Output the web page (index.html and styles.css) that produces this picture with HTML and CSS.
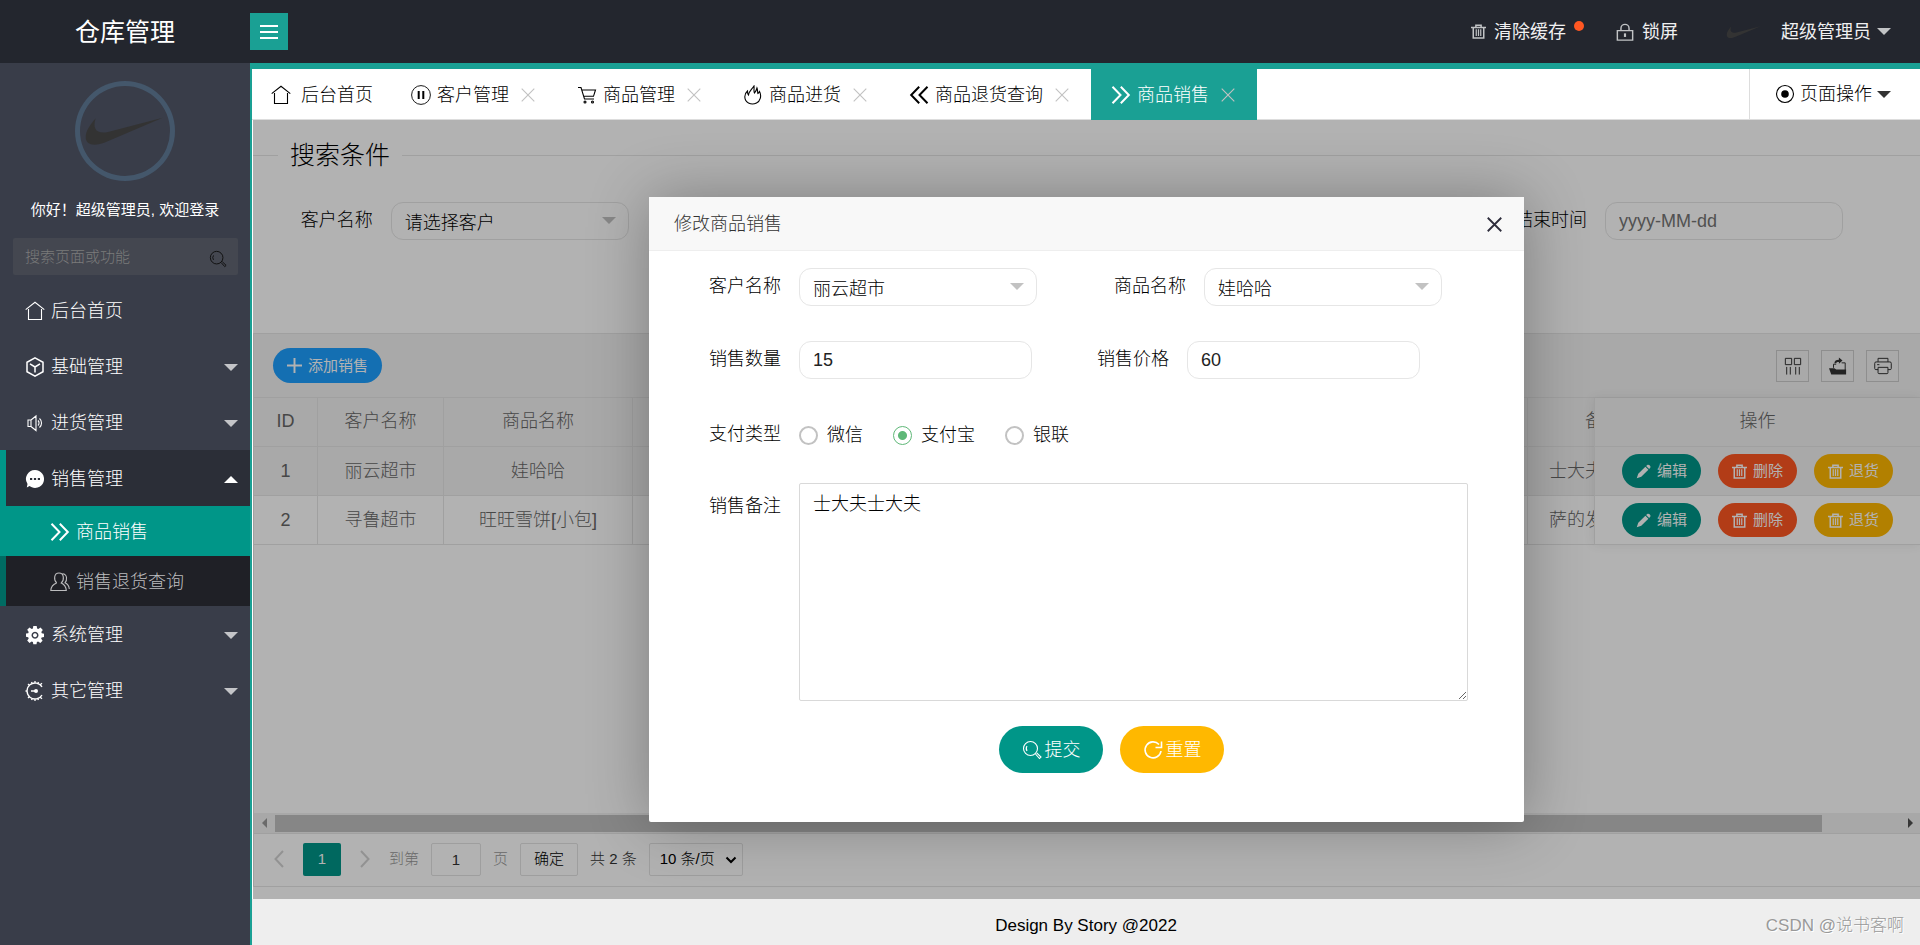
FILE: index.html
```html
<!DOCTYPE html>
<html lang="zh-CN">
<head>
<meta charset="utf-8">
<title>仓库管理</title>
<link rel="stylesheet" href="styles.css">
</head>
<body>
<svg class="defs" aria-hidden="true">
  <symbol id="home" viewBox="0 0 20 20"><path d="M.7 8.600 10 1.200l9.300 7.400M3.500 8v10.500h13V8"/></symbol>
  <symbol id="cube" viewBox="0 0 20 20"><path d="M10 .9 18 5.300v9.400l-8 4.400-8-4.400V5.300zM5 6.800l5 3.200 5-3.200M10 10v5.600" stroke-width="1.500"/></symbol>
  <symbol id="sound" viewBox="0 0 20 20"><path d="M3 7h3v6.500H3zM6 7l5-4v14.500l-5-4M13 7.500a3.500 3.500 0 0 1 0 5M14.500 5.500a6 6 0 0 1 0 9"/></symbol>
  <symbol id="chat" viewBox="0 0 20 20"><path fill="currentColor" stroke="none" fill-rule="evenodd" d="M10 1a9 9 0 1 1-5.500 16.100L1.800 18.500l.7-3.500A9 9 0 0 1 10 1zM5 8.900v2.200h2.200V8.900zm3.900 0v2.200h2.200V8.900zm3.900 0v2.200H15V8.900z"/></symbol>
  <symbol id="next" viewBox="0 0 20 20"><path stroke-width="2" d="m1.500 1.800 8 8.200-8 8.200M9.800 1.800l8 8.200-8 8.200"/></symbol>
  <symbol id="prev" viewBox="0 0 20 20"><path stroke-width="2" d="m10.200 1.800-8 8.200 8 8.200M18.500 1.800l-8 8.200 8 8.200"/></symbol>
  <symbol id="users" viewBox="0 0 20 20"><path d="M6.700 11C3.500 8 3.800 1 9 1s5.500 7 2.300 10c3 1.300 4.700 3.800 5 7.500H.8c.2-4 2.300-6.200 5.900-7.500M12.500 1.800c5 .3 4.800 6.500 2.500 9 2.500 1 4 3.400 4.300 6.200"/></symbol>
  <symbol id="gear" viewBox="0 0 20 20"><path fill="currentColor" stroke="none" fill-rule="evenodd" d="M8.300 1h3.400l.4 2.600 1.200.5 2.200-1.500 2.300 2.300-1.500 2.200.5 1.200 2.200.4v3.200l-2.400.5-.5 1.200 1.500 2.100-2.300 2.400-2.200-1.500-1.200.5-.4 2.100H8.300L7.900 17l-1.200-.5-2.200 1.500-2.300-2.400 1.500-2.100-.5-1.200L1 11.800V8.600l2.200-.4.500-1.200-1.500-2.200 2.300-2.300 2.200 1.500 1.200-.5zM10 6.700a3.500 3.500 0 1 0 .01 0zm0 1.500a2 2 0 1 1-.01 0z"/></symbol>
  <symbol id="cog" viewBox="0 0 20 20"><path stroke-width="1.300" d="M17 6A8 8 0 1 0 17 14M.5 10h2M10 2V0M10 20v-2M4.500 4.500 3 3M4.500 15.500 3 17M15.500 3.500l1.500-1.300M15.500 16.500l1.500 1.300M6.500 1l.7 1.600M6.500 19l.7-1.600M13.500 1l-.7 1.600M13.500 19l-.7-1.600M6 10h5"/><circle cx="11" cy="10" r="2" fill="currentColor" stroke="none"/></symbol>
  <symbol id="search" viewBox="0 0 20 20"><circle cx="8.500" cy="8.500" r="7"/><path d="M5 11a4.500 4.500 0 0 1 0-5M13.500 14l4 4.500 1.500-1.400-4.300-4.200"/></symbol>
  <symbol id="pause" viewBox="0 0 20 20"><circle cx="10" cy="10" r="9.400" stroke-width=".9"/><path stroke-width="2" d="M7.700 6v8M12.300 6v8"/></symbol>
  <symbol id="cart" viewBox="0 0 20 20"><path d="M1 2.500h3L7.500 14H17M5 5h13.500l-2 6.300H6.800"/><circle cx="8" cy="17" r="1"/><circle cx="15.500" cy="17" r="1"/></symbol>
  <symbol id="fire" viewBox="0 0 20 20"><path d="M5.500 18C.5 15 1 9 4.500 6c0 2 .2 3 1 4 .5-3.800 3-5 5.500-9 .3 3-.5 5.500.5 7 1-1.200 2-3 2.500-5 .8 1.800.4 4 .9 5.500.9-.6 1.300-1.300 1.600-2C19 11 17 16.500 13.500 18c-2.500 1.300-5.500 1.300-8 0"/></symbol>
  <symbol id="target" viewBox="0 0 20 20"><circle cx="10" cy="10" r="8.500"/><circle cx="10" cy="10" r="3.800" fill="currentColor" stroke="none"/></symbol>
  <symbol id="trash" viewBox="0 0 20 20"><path stroke-width="2" d="M0 4.500h20M6.500 4V1.800h7V4M3 5v13.500h14V5"/><path stroke-width="1.600" d="M7 7v9M10 7v9M13 7v9"/></symbol>
  <symbol id="lock" viewBox="0 0 20 20"><path stroke-width="1.600" d="M1.500 8.500h17V19h-17zM5.500 8.500V6a4.500 4.500 0 0 1 9 0v2.500"/><path stroke-width="2.400" d="M10 11.500v4"/></symbol>
  <symbol id="pencil" viewBox="0 0 20 20"><path fill="currentColor" stroke="none" d="M1 19 3 13 12.500 3.500l4 4L7 17zM13.500 2.500 15.500 1q1.500-.5 3 1t.5 3l-1.500 1.500z"/></symbol>
  <symbol id="plus" viewBox="0 0 20 20"><path stroke-width="2.600" d="M10 0v20M0 10h20"/></symbol>
  <symbol id="close" viewBox="0 0 20 20"><path d="m1 1 18 18M19 1 1 19"/></symbol>
  <symbol id="columns" viewBox="0 0 20 20"><path d="M1.500 1.500h7v7h-7zM11.500 1.500h7v7h-7zM3 11v8.500M7 11v8.500M13 11v8.500M17 11v8.500"/></symbol>
  <symbol id="export" viewBox="0 0 20 20"><path d="M5 12V8h3M14 6.500h4V18"/><path fill="currentColor" stroke="none" d="M0 12.500h6l2 1.500h11v5.500H2.500zM6 7c0-3 2-4 5-4V.5L15 4l-4 3.500V5.500C9 5.500 8 6 8 7z"/></symbol>
  <symbol id="print" viewBox="0 0 20 20"><path d="M4.500 5.500v-4h11v4M4.500 14H2q-1.200 0-1.200-1.200V7q0-1.500 1.500-1.500h15.400q1.500 0 1.500 1.500v5.800Q19.200 14 18 14h-2.500M4.500 11.500h11v6q0 1-1 1h-9q-1 0-1-1zM3.500 8.500H6"/></symbol>
  <symbol id="refresh" viewBox="0 0 20 20"><path stroke-width="1.600" d="M18 11a8 8 0 1 1-2-6.500M18.500 1.500v6h-6"/></symbol>
  <symbol id="swoosh" viewBox="0 0 100 100"><path fill="#333" stroke="none" d="M20.700 37.300C14 45 10.700 51 10.700 56 10.700 64 19 66 31 61L87.700 36.700 33 51C22 53.500 17 48 20.700 37.300z"/></symbol>
</svg>

<div class="app">
  <header class="header">
    <h1 class="logo">仓库管理</h1>
    <button class="menu-toggle" type="button" aria-label="菜单"><span></span><span></span><span></span></button>
    <nav class="top-nav">
      <a class="top-link" href="#"><svg class="icon icon-s"><use href="#trash"/></svg>清除缓存<i class="dot"></i></a>
      <a class="top-link lock" href="#"><svg class="icon icon-m"><use href="#lock"/></svg>锁屏</a>
      <a class="top-link user" href="#"><svg class="user-pic"><use href="#swoosh"/></svg>超级管理员<i class="caret"></i></a>
    </nav>
  </header>

  <aside class="sidebar">
    <div class="avatar"><svg><use href="#swoosh"/></svg></div>
    <p class="greeting">你好！超级管理员, 欢迎登录</p>
    <div class="side-search">
      <input type="text" placeholder="搜索页面或功能" aria-label="搜索页面或功能">
      <svg class="icon icon-m"><use href="#search"/></svg>
    </div>
    <nav class="side-nav">
      <a class="nav-item" href="#"><svg class="icon"><use href="#home"/></svg>后台首页</a>
      <a class="nav-item" href="#"><svg class="icon"><use href="#cube"/></svg>基础管理<i class="caret"></i></a>
      <a class="nav-item" href="#"><svg class="icon"><use href="#sound"/></svg>进货管理<i class="caret"></i></a>
      <div class="nav-group">
        <a class="nav-item open" href="#"><svg class="icon"><use href="#chat"/></svg>销售管理<i class="caret up"></i></a>
        <a class="sub-item current" href="#"><svg class="icon"><use href="#next"/></svg>商品销售</a>
        <a class="sub-item" href="#"><svg class="icon"><use href="#users"/></svg>销售退货查询</a>
      </div>
      <a class="nav-item" href="#"><svg class="icon"><use href="#gear"/></svg>系统管理<i class="caret"></i></a>
      <a class="nav-item" href="#"><svg class="icon"><use href="#cog"/></svg>其它管理<i class="caret"></i></a>
    </nav>
  </aside>

  <main class="main">
    <div class="tabs">
      <a class="tab home" href="#"><svg class="icon"><use href="#home"/></svg>后台首页</a>
      <a class="tab" href="#"><svg class="icon"><use href="#pause"/></svg>客户管理<svg class="tab-close"><use href="#close"/></svg></a>
      <a class="tab" href="#"><svg class="icon"><use href="#cart"/></svg>商品管理<svg class="tab-close"><use href="#close"/></svg></a>
      <a class="tab" href="#"><svg class="icon"><use href="#fire"/></svg>商品进货<svg class="tab-close"><use href="#close"/></svg></a>
      <a class="tab" href="#"><svg class="icon"><use href="#prev"/></svg>商品退货查询<svg class="tab-close"><use href="#close"/></svg></a>
      <a class="tab active" href="#"><svg class="icon"><use href="#next"/></svg>商品销售<svg class="tab-close"><use href="#close"/></svg></a>
      <a class="page-ops" href="#"><svg class="icon"><use href="#target"/></svg>页面操作<i class="caret"></i></a>
    </div>

    <section class="frame">
      <h2 class="search-title"><span>搜索条件</span></h2>
      <form class="search-form">
        <div class="search-field">
          <label for="s-customer">客户名称</label>
          <div class="select"><select id="s-customer"><option>请选择客户</option></select></div>
        </div>
        <div class="search-field last">
          <label for="s-end">结束时间</label>
          <input class="input" id="s-end" type="text" placeholder="yyyy-MM-dd">
        </div>
      </form>

      <div class="grid">
        <div class="toolbar">
          <button class="btn btn-blue" type="button"><svg class="icon icon-s"><use href="#plus"/></svg>添加销售</button>
          <div class="tools">
            <button type="button" aria-label="筛选列"><svg class="icon icon-m"><use href="#columns"/></svg></button>
            <button type="button" aria-label="导出"><svg class="icon icon-m"><use href="#export"/></svg></button>
            <button type="button" aria-label="打印"><svg class="icon icon-m"><use href="#print"/></svg></button>
          </div>
        </div>
        <div class="tables">
          <div class="scroll-area">
            <table class="table">
              <colgroup><col class="c-id"><col class="c-customer"><col class="c-goods"><col class="c-rest"><col class="c-remark"></colgroup>
              <thead><tr><th>ID</th><th>客户名称</th><th>商品名称</th><th></th><th>备注</th></tr></thead>
              <tbody>
                <tr class="hover"><td>1</td><td>丽云超市</td><td>娃哈哈</td><td></td><td>士大夫士大夫</td></tr>
                <tr><td>2</td><td>寻鲁超市</td><td>旺旺雪饼[小包]</td><td></td><td>萨的发萨的发</td></tr>
              </tbody>
            </table>
          </div>
          <div class="fixed-area">
            <table class="table">
              <thead><tr><th>操作</th></tr></thead>
              <tbody>
                <tr class="hover"><td><div class="actions">
                  <button class="btn btn-green" type="button"><svg class="icon icon-s"><use href="#pencil"/></svg>编辑</button>
                  <button class="btn btn-red" type="button"><svg class="icon icon-s"><use href="#trash"/></svg>删除</button>
                  <button class="btn btn-yellow" type="button"><svg class="icon icon-s"><use href="#trash"/></svg>退货</button>
                </div></td></tr>
                <tr><td><div class="actions">
                  <button class="btn btn-green" type="button"><svg class="icon icon-s"><use href="#pencil"/></svg>编辑</button>
                  <button class="btn btn-red" type="button"><svg class="icon icon-s"><use href="#trash"/></svg>删除</button>
                  <button class="btn btn-yellow" type="button"><svg class="icon icon-s"><use href="#trash"/></svg>退货</button>
                </div></td></tr>
              </tbody>
            </table>
          </div>
        </div>
        <div class="scrollbar"><i class="arrow left"></i><div class="track"><div class="thumb"></div></div><i class="arrow right"></i></div>
        <div class="pager">
          <svg class="chevron" viewBox="0 0 10 18"><path d="M9 1 1.500 9 9 17"/></svg>
          <button class="page current" type="button">1</button>
          <svg class="chevron" viewBox="0 0 10 18"><path d="M1 1 8.500 9 1 17"/></svg>
          <label class="muted" for="page-no">到第</label>
          <input class="page-no" id="page-no" type="text" value="1">
          <span class="muted">页</span>
          <button class="page go" type="button">确定</button>
          <span class="total">共 2 条</span>
          <div class="page-size"><select aria-label="每页条数"><option>10 条/页</option></select><svg viewBox="0 0 12 8"><path d="m1.500 1.500 4.500 4.500 4.500-4.500"/></svg></div>
        </div>
      </div>

      <div class="shade">
        <div class="dialog" role="dialog" aria-labelledby="dialog-title">
          <div class="dialog-head">
            <h3 id="dialog-title">修改商品销售</h3>
            <button type="button" aria-label="关闭"><svg class="icon icon-s"><use href="#close"/></svg></button>
          </div>
          <form class="dialog-form">
            <div class="row row-selects">
              <label for="f-customer">客户名称</label>
              <div class="select"><select id="f-customer"><option>丽云超市</option></select></div>
              <label for="f-goods" class="second">商品名称</label>
              <div class="select"><select id="f-goods"><option>娃哈哈</option></select></div>
            </div>
            <div class="row row-inputs">
              <label for="f-count">销售数量</label>
              <input class="input" id="f-count" type="text" value="15">
              <label for="f-price" class="second">销售价格</label>
              <input class="input" id="f-price" type="text" value="60">
            </div>
            <div class="row row-radios" role="radiogroup" aria-labelledby="pay-label">
              <span class="label" id="pay-label">支付类型</span>
              <div class="radios">
                <label><input type="radio" name="pay">微信</label>
                <label><input type="radio" name="pay" checked>支付宝</label>
                <label><input type="radio" name="pay">银联</label>
              </div>
            </div>
            <div class="row row-text">
              <label for="f-remark">销售备注</label>
              <textarea id="f-remark">士大夫士大夫</textarea>
            </div>
            <div class="buttons">
              <button class="btn btn-large btn-green" type="button"><svg class="icon"><use href="#search"/></svg>提交</button>
              <button class="btn btn-large btn-yellow" type="reset"><svg class="icon"><use href="#refresh"/></svg>重置</button>
            </div>
          </form>
        </div>
      </div>
    </section>

    <footer class="footer">Design By Story @2022<span class="watermark">CSDN @说书客啊</span></footer>
  </main>
</div>
</body>
</html>
```
FILE: styles.css
```css
* { box-sizing: border-box; }

body {
  margin: 0;
  color: #000;
  font: 300 18px/24px "Liberation Sans", "Noto Sans CJK SC", sans-serif;
}

h1, h2, h3, p { margin: 0; font-size: inherit; font-weight: inherit; }
a { color: inherit; text-decoration: none; }
button, input, select, textarea { font: inherit; color: inherit; margin: 0; }
button { border: 0; padding: 0; background: none; }

.defs { position: absolute; width: 0; height: 0; }

.icon {
  flex: none;
  width: 20px;
  height: 20px;
  fill: none;
  stroke: currentColor;
  stroke-width: 1.1px;
}
.icon-s { width: 15px; height: 15px; }
.icon-m { width: 18px; height: 18px; }

.caret {
  flex: none;
  border: 7px solid transparent;
  border-top-color: currentColor;
  border-bottom-width: 0;
}
.caret.up {
  border-top-width: 0;
  border-bottom: 7px solid #fff;
}

.app {
  display: grid;
  grid-template: 63px minmax(0, 1fr) / 250px minmax(0, 1fr);
  height: 100vh;
  overflow: hidden;
}

/* Header */
.header {
  grid-column: 1 / -1;
  display: flex;
  align-items: center;
  background: #23262e;
  color: #fff;
}
.logo {
  width: 250px;
  text-align: center;
  font-size: 25px;
  line-height: 36px;
  font-weight: 400;
}
.menu-toggle {
  display: flex;
  flex-direction: column;
  align-items: center;
  justify-content: center;
  gap: 4px;
  width: 38px;
  height: 37px;
  background: #1aa094;
}
.menu-toggle span { width: 18px; height: 2px; background: #fff; }
.top-nav {
  display: flex;
  align-items: center;
  margin-left: auto;
  padding-right: 29px;
  font-weight: 400;
}
.top-link { display: flex; align-items: center; gap: 8px; color: #f0f0f1; }
.top-link .icon, .top-link .caret { color: #c1c3c5; }
.dot {
  width: 10px;
  height: 10px;
  margin-bottom: 12px;
  border-radius: 50%;
  background: #ff5722;
}
.lock { margin-left: 32px; }
.user { gap: 6px; margin-left: 44px; }
.user-pic { width: 44px; height: 44px; margin-right: 9px; }

/* Sidebar */
.sidebar { background: #393d49; color: #fff; }
.avatar {
  width: 100px;
  height: 100px;
  margin: 18px auto 16px;
  border-radius: 50%;
  box-shadow: inset 0 0 0 5px #44576b;
}
.avatar svg { display: block; width: 100px; height: 100px; }
.greeting { text-align: center; font-size: 15px; line-height: 26px; font-weight: 400; }
.side-search {
  display: flex;
  align-items: center;
  height: 37px;
  margin: 15px 12px 7px 13px;
  padding: 0 11px 0 12px;
  border-radius: 2px;
  background: #444750;
}
.side-search input {
  flex: 1;
  min-width: 0;
  border: 0;
  padding: 0;
  background: none;
  font-size: 15px;
}
.side-search input::placeholder { color: #7b7b7b; }
.side-search .icon { color: #111; margin-top: 5px; }
.nav-item {
  display: flex;
  align-items: center;
  gap: 6px;
  height: 56px;
  padding: 2px 12px 0 25px;
}
.nav-item .caret { margin-left: auto; }
.nav-item .caret:not(.up) { color: #c4c5c8; }
.nav-group { background: linear-gradient(to right, #006b62 6px, #1f2026 6px); }
.nav-item.open { background: linear-gradient(to right, #009688 6px, #2b2e37 6px); }
.sub-item {
  display: flex;
  align-items: center;
  gap: 6px;
  height: 50px;
  padding: 2px 0 0 50px;
  color: #bcbcbe;
}
.sub-item.current { background: #009688; color: #fff; }

/* Tabs */
.main {
  display: flex;
  flex-direction: column;
  border-top: 6px solid #1aa094;
  border-left: 2px solid #1aa094;
  background: #fff;
}
.tabs { display: flex; height: 51px; border-bottom: 1px solid #ddd; }
.tab {
  display: flex;
  align-items: center;
  gap: 6px;
  height: 51px;
  padding: 0 22px 0 20px;
}
.tab.home { gap: 10px; padding-left: 19px; padding-right: 18px; }
.tab-close {
  width: 14px;
  height: 14px;
  margin-left: 6px;
  fill: none;
  stroke: #c2c2c2;
  stroke-width: 1.6px;
}
.tab.active { background: #1aa094; color: #fff; }
.page-ops {
  display: flex;
  align-items: center;
  gap: 5px;
  margin-left: auto;
  padding: 0 29px 0 25px;
  border-left: 1px solid #ddd;
}
.page-ops .caret { color: #333; }

/* Page content */
.frame {
  position: relative;
  flex: 1;
  display: flex;
  flex-direction: column;
  min-height: 0;
  margin-left: 1px;
}
.search-title {
  display: flex;
  align-items: center;
  gap: 12px;
  margin-top: 17px;
  font-size: 25px;
  line-height: 36px;
}
.search-title::before, .search-title::after { content: ""; height: 1px; background: #e6e6e6; }
.search-title::before { width: 25px; }
.search-title::after { flex: 1; }
.search-form {
  display: grid;
  grid-template-columns: repeat(4, minmax(0, 1fr));
  height: 131px;
  margin-top: 29px;
  padding-right: 48px;
}
.search-field {
  display: flex;
  justify-content: flex-end;
  gap: 18px;
  line-height: 36px;
}
.search-field:first-child { padding-right: 29px; }
.search-field.last { grid-column: 4; padding-right: 29px; }
.search-field label { white-space: nowrap; }
.select { position: relative; flex: none; width: 238px; height: 38px; }
.select select {
  appearance: none;
  width: 100%;
  height: 100%;
  padding: 2px 13px 0;
  border: 1px solid #e6e6e6;
  border-radius: 12px;
  background: transparent;
}
.select::after {
  content: "";
  position: absolute;
  top: 15px;
  right: 13px;
  border: 7px solid transparent;
  border-top-color: #c2c2c2;
  border-bottom: 0;
}
.input {
  flex: none;
  width: 238px;
  height: 38px;
  padding: 0 13px;
  border: 1px solid #e6e6e6;
  border-radius: 12px;
  background: transparent;
  color: #222;
}
.input::placeholder { color: #757575; }

/* Data grid */
.grid {
  flex: 1;
  display: flex;
  flex-direction: column;
  margin-bottom: 12px;
  border: 1px solid #e6e6e6;
  border-right: 0;
  color: #666;
}
.toolbar {
  display: flex;
  align-items: center;
  justify-content: space-between;
  height: 64px;
  padding: 0 21px 0 19px;
  border-bottom: 1px solid #e6e6e6;
  background: #f2f2f2;
}
.tools { display: flex; gap: 12px; }
.tools button {
  display: grid;
  place-items: center;
  width: 33px;
  height: 32px;
  border: 1px solid #ccc;
  color: #333;
}
.btn {
  display: inline-flex;
  align-items: center;
  justify-content: center;
  gap: 6px;
  width: 79px;
  height: 34px;
  border-radius: 100px;
  color: #fff;
  font-size: 15px;
  font-weight: 400;
}
.btn-blue { width: 109px; height: 35px; background: #1e9fff; }
.btn-green { background: #009688; }
.btn-red { background: #ff5722; }
.btn-yellow { background: #ffb800; }

.tables { display: flex; flex: 1; }
.scroll-area { flex: 1; min-width: 0; overflow: hidden; }
.fixed-area { width: 326px; }
.table { border-collapse: separate; border-spacing: 0; table-layout: fixed; width: 100%; }
.scroll-area .table { width: 1425px; }
.c-id { width: 64px; }
.c-customer { width: 126px; }
.c-goods { width: 189px; }
.c-rest { width: 895px; }
.c-remark { width: 151px; }
.table th, .table td {
  height: 49px;
  padding: 0;
  border-right: 1px solid #e6e6e6;
  border-bottom: 1px solid #e6e6e6;
  text-align: center;
  font-weight: 300;
  white-space: nowrap;
}
.table th { padding-bottom: 2px; }
.table th, .table .hover td { background: #f2f2f2; }
.fixed-area .table {
  border-left: 1px solid #e6e6e6;
  box-shadow: -1px 0 10px rgba(0, 0, 0, .08);
}
.fixed-area th, .fixed-area td { border-right: 0; }
.actions { display: flex; justify-content: center; gap: 17px; }

.scrollbar { display: flex; align-items: center; height: 20px; background: #f1f1f1; }
.track { flex: 1; height: 17px; padding: 0 78px 0 0; }
.thumb { height: 100%; background: #c1c1c1; }
.arrow { border: 5px solid transparent; }
.arrow.left { margin: 0 8px 0 3px; border-right-color: #999; }
.arrow.right { margin: 0 2px 0 8px; border-left-color: #505050; }

.pager {
  display: flex;
  align-items: center;
  gap: 12px;
  height: 53px;
  padding: 0 0 2px 20px;
  border-top: 1px solid #e6e6e6;
  font-size: 15px;
}
.chevron { width: 10px; height: 18px; margin-right: 7px; fill: none; stroke: #d2d2d2; stroke-width: 2px; }
.page { height: 33px; border-radius: 2px; }
.page.current { width: 38px; margin-right: 7px; background: #009688; color: #fff; }
.muted { color: #999; }
.page-no {
  width: 50px;
  height: 33px;
  border: 1px solid #e2e2e2;
  border-radius: 2px;
  background: transparent;
  text-align: center;
  color: #333;
}
.page.go { width: 58px; border: 1px solid #e2e2e2; color: #000; }
.total { color: #333; }
.page-size { position: relative; }
.page-size select {
  appearance: none;
  width: 94px;
  height: 33px;
  padding: 0 10px;
  border: 1px solid #e2e2e2;
  border-radius: 2px;
  background: transparent;
  color: #000;
}
.page-size svg {
  position: absolute;
  top: 13px;
  right: 6px;
  width: 12px;
  height: 8px;
  fill: none;
  stroke: #000;
  stroke-width: 2px;
}

/* Dialog */
.shade {
  position: absolute;
  inset: 0;
  display: grid;
  place-items: center;
  overflow: hidden;
  background: rgba(0, 0, 0, .3);
}
.dialog {
  width: 875px;
  padding-bottom: 49px;
  border-radius: 2px;
  background: #fff;
  box-shadow: 1px 1px 62px rgba(0, 0, 0, .3);
}
.dialog-head {
  display: flex;
  align-items: center;
  justify-content: space-between;
  height: 54px;
  padding: 0 22px 0 25px;
  border-bottom: 1px solid #eee;
  background: #f8f8f8;
  color: #333;
}
.dialog-head button { display: flex; color: #2e2d3c; margin-top: 2px; }
.dialog-head .icon { stroke-width: 2.4px; }
.dialog-form { display: flex; flex-direction: column; gap: 35px; padding: 17px 56px 0 0; }
.row { display: flex; gap: 18px; line-height: 36px; }
.row > label, .label { flex: none; width: 132px; text-align: right; }
.row-selects .second { margin-left: -1px; }
.row-inputs .second { width: 119px; }
.row-inputs .input { width: 233px; }
.row-radios { padding-top: 2px; }
.radios { display: flex; gap: 30px; line-height: 38px; }
.radios label { display: flex; align-items: center; gap: 9px; }
.radios input {
  appearance: none;
  width: 19px;
  height: 19px;
  border: 2px solid #c2c2c2;
  border-radius: 50%;
}
.radios input:checked {
  border: 1px solid #5fb878;
  background: radial-gradient(circle, #5fb878 4px, transparent 5px);
}
.row-text { margin-top: -6px; line-height: 46px; }
textarea {
  flex: 1;
  height: 218px;
  padding: 8px 13px;
  border: 1px solid #d9d9d9;
  border-radius: 2px;
  line-height: 25px;
  resize: both;
}
.buttons { display: flex; justify-content: center; gap: 17px; margin: -10px -56px 0 50px; }
.btn-large { width: 104px; height: 47px; gap: 3px; font-size: 18px; font-weight: 300; }

/* Footer */
.footer {
  position: relative;
  height: 46px;
  padding-top: 15px;
  background: #eee;
  text-align: center;
  font-size: 17px;
}
.watermark {
  position: absolute;
  right: 16px;
  top: 15px;
  color: #999;
  text-shadow: 1px 1px 0 #fff;
}
```
